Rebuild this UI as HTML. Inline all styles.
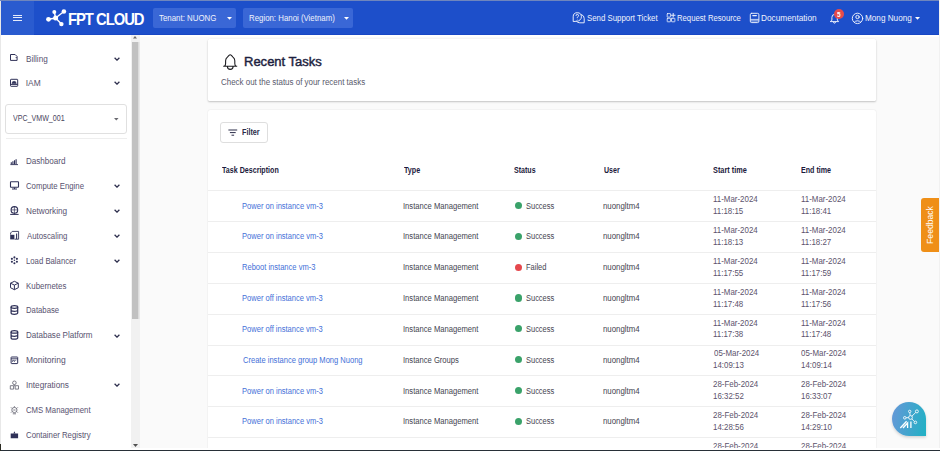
<!DOCTYPE html>
<html><head><meta charset="utf-8"><style>
html,body{margin:0;padding:0;width:940px;height:451px;overflow:hidden;background:#fff}
body{position:relative;font-family:"Liberation Sans", sans-serif}
.t{position:absolute;white-space:nowrap}
</style></head><body>
<div style="position:absolute;left:0;top:34.5px;width:940px;height:416px;background:#fff"></div>
<div style="position:absolute;left:1px;top:1px;width:938px;height:33.9px;background:#1d4fca"></div>
<div style="position:absolute;left:1px;top:33.6px;width:938px;height:1.3px;background:#1847c4"></div>
<div style="position:absolute;left:1px;top:1px;width:32.5px;height:33.5px;background:#2a5bcf"></div>
<div style="position:absolute;left:0;top:0;width:940px;height:1.2px;background:#6f86bd"></div>
<div style="position:absolute;left:12.5px;top:14.6px;width:9.7px;height:1.1px;background:#e6ecfa"></div>
<div style="position:absolute;left:12.5px;top:17.4px;width:9.7px;height:1.1px;background:#e6ecfa"></div>
<div style="position:absolute;left:12.5px;top:20.1px;width:9.7px;height:1.1px;background:#e6ecfa"></div>
<svg style="position:absolute;left:0;top:0" width="150" height="35" viewBox="0 0 150 35">
<g stroke="#fff" stroke-width="1.4" fill="none"><line x1="55.6" y1="18" x2="48.5" y2="19.3"/><line x1="55.6" y1="18" x2="54.3" y2="12.1"/><line x1="55.6" y1="18" x2="63.9" y2="11.5"/><line x1="55.6" y1="18" x2="61.4" y2="24.1"/></g>
<g fill="#fff"><circle cx="55.6" cy="18" r="2.5"/><circle cx="48.5" cy="19.3" r="2.4"/><circle cx="54.3" cy="12.1" r="2"/><circle cx="63.9" cy="11.5" r="2.3"/><circle cx="61.4" cy="24.1" r="2.2"/></g>
</svg>
<div class="t" style="left:67.71px;top:11px;font-size:16.200px;line-height:16.200px;color:#fff;font-weight:700;transform:scaleX(0.9126);transform-origin:0 0;letter-spacing:-1.1px;">FPT CLOUD</div>
<div style="position:absolute;left:153.2px;top:8.2px;width:82.4px;height:19.4px;background:#3a67d6;border-radius:2px"></div>
<div style="position:absolute;left:242.9px;top:8.2px;width:110.5px;height:19.4px;background:#3a67d6;border-radius:2px"></div>
<div class="t" style="left:159.34px;top:14px;font-size:8.400px;line-height:8.400px;color:#f0f3fc;font-weight:400;transform:scaleX(0.9418);transform-origin:0 0;">Tenant: NUONG</div>
<div class="t" style="left:248.57px;top:14px;font-size:8.400px;line-height:8.400px;color:#f0f3fc;font-weight:400;transform:scaleX(0.9371);transform-origin:0 0;">Region: Hanoi (Vietnam)</div>
<svg style="position:absolute;left:226.80px;top:16.80px" width="5" height="2.8" viewBox="0 0 5 2.8"><polygon points="0,0 5,0 2.5,2.8" fill="#fff"/></svg>
<svg style="position:absolute;left:344.40px;top:16.80px" width="5" height="2.8" viewBox="0 0 5 2.8"><polygon points="0,0 5,0 2.5,2.8" fill="#fff"/></svg>
<div class="t" style="left:587.29px;top:14px;font-size:8.400px;line-height:8.400px;color:#f0f3fc;font-weight:400;transform:scaleX(0.9367);transform-origin:0 0;">Send Support Ticket</div>
<div class="t" style="left:677.38px;top:14px;font-size:8.400px;line-height:8.400px;color:#f0f3fc;font-weight:400;transform:scaleX(0.9213);transform-origin:0 0;">Request Resource</div>
<div class="t" style="left:760.64px;top:14px;font-size:8.400px;line-height:8.400px;color:#f0f3fc;font-weight:400;transform:scaleX(0.9882);transform-origin:0 0;">Documentation</div>
<div class="t" style="left:864.84px;top:14px;font-size:8.400px;line-height:8.400px;color:#f0f3fc;font-weight:400;transform:scaleX(0.9754);transform-origin:0 0;">Mong Nuong</div>
<svg style="position:absolute;left:915.20px;top:16.80px" width="5" height="2.8" viewBox="0 0 5 2.8"><polygon points="0,0 5,0 2.5,2.8" fill="#fff"/></svg>
<svg style="position:absolute;left:0;top:0" width="940" height="35" viewBox="0 0 940 35" fill="none" stroke="#eef2fc" stroke-width="0.95" stroke-linejoin="round" stroke-linecap="round">
<path d="M573.2 21.2 v-4.4 a4.1 4.1 0 0 1 4.1 -4.1 a4.1 4.1 0 0 1 4.1 4.1 a4.3 4.3 0 0 1 -4.1 4.4 z"/>
<path d="M581.6 14.6 a4 4 0 0 1 2.6 3.8 v4.4 h-4.4 a4.1 4.1 0 0 1 -3.4 -1.6"/>
<path d="M576 15.6 a1.3 1.3 0 1 1 1.9 1.1 c-.5 .3 -.6 .5 -.6 1.1" stroke-width="0.9"/><circle cx="577.3" cy="19.3" r=".35" fill="#eef2fc" stroke="none"/>
<g stroke-width=".8"><rect x="667.2" y="13.6" width="3.4" height="3.5" rx=".4"/><rect x="667.2" y="18.3" width="3.4" height="3.5" rx=".4"/><rect x="671.5" y="18.3" width="3.4" height="3.5" rx=".4"/></g>
<path d="M673.2 13.4 v3.7 M671.4 15.25 h3.7"/>
<rect x="750.3" y="13.3" width="8.6" height="9.3" rx="1.4"/>
<path d="M752.8 15.6 h3.6" stroke-width="1.1"/><path d="M750.8 19.4 h7.6 M750.8 20.9 h7.6" stroke-width=".8"/>
<path d="M830.6 21.6 h8 l-1.3 -1.6 v-2.6 a2.7 3 0 0 0 -5.4 0 v2.6 z M833.5 22.2 a1 1 0 0 0 2 0"/>
<circle cx="857.5" cy="18.4" r="5.2"/><circle cx="857.5" cy="17" r="1.7"/><path d="M854.3 22.2 a3.6 2.6 0 0 1 6.4 0"/>
</svg>
<div style="position:absolute;left:834px;top:8.6px;width:10px;height:10px;border-radius:50%;background:#e64b4b"></div>
<div class="t" style="left:837.21px;top:12px;font-size:6.500px;line-height:6.500px;color:#fff;font-weight:700;transform:scaleX(0.9846);transform-origin:0 0;">5</div>
<div style="position:absolute;left:131px;top:34.5px;width:8.6px;height:415px;background:#f1f1f1"></div>
<div style="position:absolute;left:132.2px;top:41.5px;width:6.2px;height:277.3px;background:#c1c1c1"></div>
<svg style="position:absolute;left:133.3px;top:36.2px" width="4" height="2.4" viewBox="0 0 4 2.4"><polygon points="0,2.4 4,2.4 2,0" fill="#6a6a6a"/></svg>
<div style="position:absolute;left:138.3px;top:41.5px;width:1.6px;height:277.3px;background:linear-gradient(90deg,#d6d6d6,#eeeeee)"></div>
<svg style="position:absolute;left:133px;top:443.5px" width="5" height="3" viewBox="0 0 5 3"><polygon points="0,0 5,0 2.5,3" fill="#505050"/></svg>
<div class="t" style="left:25.85px;top:55px;font-size:8.400px;line-height:8.400px;color:#57526f;font-weight:400;transform:scaleX(0.9733);transform-origin:0 0;">Billing</div>
<svg style="position:absolute;left:114.40px;top:56.80px" width="6" height="4" viewBox="0 0 6 4"><path d="M0.6 0.7 L3 3.1 L5.4 0.7" stroke="#2e2f4e" stroke-width="1.3" fill="none"/></svg>
<div class="t" style="left:25.75px;top:79px;font-size:8.400px;line-height:8.400px;color:#57526f;font-weight:400;">IAM</div>
<svg style="position:absolute;left:114.40px;top:81.30px" width="6" height="4" viewBox="0 0 6 4"><path d="M0.6 0.7 L3 3.1 L5.4 0.7" stroke="#2e2f4e" stroke-width="1.3" fill="none"/></svg>
<div style="position:absolute;left:5.1px;top:104.4px;width:120px;height:27.4px;border:1px solid #e0e0e0;border-radius:3px;background:#fff"></div>
<div class="t" style="left:13.00px;top:114px;font-size:8.400px;line-height:8.400px;color:#4a465e;font-weight:400;transform:scaleX(0.8458);transform-origin:0 0;">VPC_VMW_001</div>
<svg style="position:absolute;left:114.40px;top:118.00px" width="4.6" height="2.6" viewBox="0 0 4.6 2.6"><polygon points="0,0 4.6,0 2.3,2.6" fill="#6a6a70"/></svg>
<div style="position:absolute;left:5.6px;top:138px;width:121.4px;height:1px;background:#eeeeee"></div>
<div class="t" style="left:25.85px;top:157px;font-size:8.400px;line-height:8.400px;color:#57526f;font-weight:400;transform:scaleX(0.9637);transform-origin:0 0;">Dashboard</div>
<div class="t" style="left:26.11px;top:182px;font-size:8.400px;line-height:8.400px;color:#57526f;font-weight:400;transform:scaleX(0.9297);transform-origin:0 0;">Compute Engine</div>
<svg style="position:absolute;left:114.40px;top:184.20px" width="6" height="4" viewBox="0 0 6 4"><path d="M0.6 0.7 L3 3.1 L5.4 0.7" stroke="#2e2f4e" stroke-width="1.3" fill="none"/></svg>
<div class="t" style="left:25.84px;top:207px;font-size:8.400px;line-height:8.400px;color:#57526f;font-weight:400;transform:scaleX(0.9811);transform-origin:0 0;">Networking</div>
<svg style="position:absolute;left:114.40px;top:209.10px" width="6" height="4" viewBox="0 0 6 4"><path d="M0.6 0.7 L3 3.1 L5.4 0.7" stroke="#2e2f4e" stroke-width="1.3" fill="none"/></svg>
<div class="t" style="left:26.50px;top:232px;font-size:8.400px;line-height:8.400px;color:#57526f;font-weight:400;transform:scaleX(0.9312);transform-origin:0 0;">Autoscaling</div>
<svg style="position:absolute;left:114.40px;top:234.00px" width="6" height="4" viewBox="0 0 6 4"><path d="M0.6 0.7 L3 3.1 L5.4 0.7" stroke="#2e2f4e" stroke-width="1.3" fill="none"/></svg>
<div class="t" style="left:25.88px;top:257px;font-size:8.400px;line-height:8.400px;color:#57526f;font-weight:400;transform:scaleX(0.9252);transform-origin:0 0;">Load Balancer</div>
<svg style="position:absolute;left:114.40px;top:258.90px" width="6" height="4" viewBox="0 0 6 4"><path d="M0.6 0.7 L3 3.1 L5.4 0.7" stroke="#2e2f4e" stroke-width="1.3" fill="none"/></svg>
<div class="t" style="left:25.87px;top:282px;font-size:8.400px;line-height:8.400px;color:#57526f;font-weight:400;transform:scaleX(0.9420);transform-origin:0 0;">Kubernetes</div>
<div class="t" style="left:25.88px;top:306px;font-size:8.400px;line-height:8.400px;color:#57526f;font-weight:400;transform:scaleX(0.9233);transform-origin:0 0;">Database</div>
<div class="t" style="left:25.86px;top:331px;font-size:8.400px;line-height:8.400px;color:#57526f;font-weight:400;transform:scaleX(0.9581);transform-origin:0 0;">Database Platform</div>
<svg style="position:absolute;left:114.40px;top:333.60px" width="6" height="4" viewBox="0 0 6 4"><path d="M0.6 0.7 L3 3.1 L5.4 0.7" stroke="#2e2f4e" stroke-width="1.3" fill="none"/></svg>
<div class="t" style="left:25.82px;top:356px;font-size:8.400px;line-height:8.400px;color:#57526f;font-weight:400;transform:scaleX(1.0138);transform-origin:0 0;">Monitoring</div>
<div class="t" style="left:25.76px;top:381px;font-size:8.400px;line-height:8.400px;color:#57526f;font-weight:400;transform:scaleX(0.9793);transform-origin:0 0;">Integrations</div>
<svg style="position:absolute;left:114.40px;top:383.40px" width="6" height="4" viewBox="0 0 6 4"><path d="M0.6 0.7 L3 3.1 L5.4 0.7" stroke="#2e2f4e" stroke-width="1.3" fill="none"/></svg>
<div class="t" style="left:26.11px;top:406px;font-size:8.400px;line-height:8.400px;color:#57526f;font-weight:400;transform:scaleX(0.9249);transform-origin:0 0;">CMS Management</div>
<div class="t" style="left:26.11px;top:431px;font-size:8.400px;line-height:8.400px;color:#57526f;font-weight:400;transform:scaleX(0.9314);transform-origin:0 0;">Container Registry</div>
<svg style="position:absolute;left:0;top:0" width="30" height="451" viewBox="0 0 30 451" fill="none" stroke="#2f3158" stroke-width="1" stroke-linejoin="round">
<path d="M10.5 54.5 h4.6 l2 2 v3.9 h-6.6 z"/><path d="M15.6 57.6 h1.4" stroke-width=".8"/>
<rect x="10.5" y="79.3" width="7.2" height="7" rx=".6"/><path d="M10.5 84.4 h7.2" /><path d="M12 83.6 a2.1 2.3 0 0 1 4.2 0 z" fill="#2f3158" stroke-width=".6"/>
<path d="M10.4 164.6 h7.6" stroke-width=".9"/><path d="M11.3 164.2 v-2 M12.9 164.2 v-3 M14.5 164.2 v-4 M16.1 164.2 v-5" stroke-width="1.1"/>
<rect x="10.5" y="181.8" width="8" height="5.4" rx=".5" stroke-width="1.1"/><path d="M12 189 h5 M14.5 187.4 v1.6" stroke-width="1.1"/>
<circle cx="14.4" cy="209.9" r="3.3" stroke-width="1.1"/><path d="M14.4 206.6 v6.6 M11.1 209.9 h6.6" stroke-width=".7"/><path d="M10.2 214.4 h8.4" stroke-width="1"/><path d="M14.4 213.2 v1.2" stroke-width="1"/>
<path d="M10.2 234.8 h4.2 v4.6 h-4.2 z" fill="#2f3158" stroke="none"/><path d="M10.6 234.6 v-1.6 l1.6 -1.6 h6.4 v7.8 h-4" stroke-width=".9"/><path d="M16.6 233.6 v5.4" stroke-width="1.1"/>
</svg>
<svg style="position:absolute;left:0;top:0" width="30" height="451" viewBox="0 0 30 451" fill="#2f3158" stroke="none">
<circle cx="14.40" cy="257.40" r="1.05"/><circle cx="16.91" cy="258.85" r="1.05"/><circle cx="16.91" cy="261.75" r="1.05"/><circle cx="14.40" cy="263.20" r="1.05"/><circle cx="11.89" cy="261.75" r="1.05"/><circle cx="11.89" cy="258.85" r="1.05"/><circle cx="14.4" cy="260.3" r=".8"/>
</svg>
<svg style="position:absolute;left:0;top:0" width="30" height="451" viewBox="0 0 30 451" fill="none" stroke="#2f3158" stroke-width="1" stroke-linejoin="round">
<path d="M14.4 281.3 l3.9 1.9 v4.5 l-3.9 2 l-3.9 -2 v-4.5 z M10.5 283.2 l3.9 1.9 l3.9 -1.9 M14.4 285.1 v4.6"/>
<g stroke-width="1.25"><ellipse cx="14.4" cy="307" rx="3.3" ry="1.3"/><path d="M11.1 307 v6 a3.3 1.3 0 0 0 6.6 0 v-6 M11.1 310.1 a3.3 1.3 0 0 0 6.6 0"/></g>
<g stroke-width="1.25"><ellipse cx="14.4" cy="331.9" rx="3.3" ry="1.3"/><path d="M11.1 331.9 v6 a3.3 1.3 0 0 0 6.6 0 v-6 M11.1 335 a3.3 1.3 0 0 0 6.6 0"/></g>
<rect x="11.1" y="357" width="6.6" height="6.6" rx=".5" stroke-width="1"/><path d="M11.1 358.8 h6.6" stroke-width=".9"/><path d="M12.6 362 v-1.6 h1.8 v1.6 M15.2 360.4 h1" stroke-width=".7"/>
</svg>
<svg style="position:absolute;left:0;top:0" width="30" height="451" viewBox="0 0 30 451" fill="none" stroke="#6f6f7c" stroke-width=".9" stroke-linejoin="round">
<circle cx="14.4" cy="382.8" r="1.8"/><rect x="10.3" y="385.7" width="3.3" height="3.4"/><rect x="15.2" y="385.7" width="3.3" height="3.4"/><path d="M14.4 384.6 v1.6"/>
<circle cx="14.4" cy="410" r="2.6"/><path d="M11 407.4 l1 1 M17.8 407.4 l-1 1 M11 412.6 l1 -1 M17.8 412.6 l-1 -1 M14.4 406.2 v1.2 M12.8 413.8 h3.2 M13.3 410 h2.2"/>
</svg>
<svg style="position:absolute;left:0;top:0" width="30" height="451" viewBox="0 0 30 451" fill="#2f3158" stroke="none">
<path d="M10.7 433.6 h7.4 v4.6 h-7.4 z"/><path d="M13.4 433.6 l1 -2.4 l1 2.4 z"/>
</svg>
<div style="position:absolute;left:139.6px;top:36.8px;width:799.4px;height:412.7px;background:#fafafa"></div>
<div style="position:absolute;left:207.6px;top:39.4px;width:668.4px;height:61.5px;background:#fff;border-radius:1.5px;box-shadow:0 1px 2px rgba(0,0,0,0.22), 0 0 1px rgba(0,0,0,0.08)"></div>
<svg style="position:absolute;left:220px;top:52px" width="20" height="20" viewBox="0 0 20 20" fill="none" stroke="#1e1e22" stroke-width="1.1" stroke-linejoin="round">
<path d="M3.2 14.3 H17.2 M4.3 14.3 Q5.6 13.6 5.6 11.5 V8.8 Q5.6 6.6 7.4 5.1 L9 3.4 Q10.2 2.2 11.4 3.4 L13 5.1 Q14.8 6.6 14.8 8.8 V11.5 Q14.8 13.6 16.1 14.3 M7.4 14.5 A2.85 2.85 0 0 0 13.1 14.5"/>
</svg>
<div class="t" style="left:243.56px;top:55px;font-size:13.200px;line-height:13.200px;color:#1d1f3f;font-weight:400;transform:scaleX(0.9861);transform-origin:0 0;-webkit-text-stroke:0.45px #1d1f3f;">Recent Tasks</div>
<div class="t" style="left:220.50px;top:78px;font-size:8.400px;line-height:8.400px;color:#585a6c;font-weight:400;transform:scaleX(0.9496);transform-origin:0 0;">Check out the status of your recent tasks</div>
<div style="position:absolute;left:207.6px;top:109.8px;width:668.4px;height:400px;background:#fff;border-radius:2px;box-shadow:0 0 1.5px rgba(0,0,0,0.14)"></div>
<div style="position:absolute;left:220.4px;top:122.4px;width:45.4px;height:18.2px;border:1px solid #dedede;border-radius:3px;background:#fff"></div>
<svg style="position:absolute;left:228px;top:129px" width="10" height="8" viewBox="0 0 10 8" stroke="#2a2c48" stroke-width="1"><path d="M0.4 1 h8.8 M1.9 3.6 h5.8 M3.5 6.2 h2.6"/></svg>
<div class="t" style="left:241.77px;top:129px;font-size:8.200px;line-height:8.200px;color:#2a2c48;font-weight:700;transform:scaleX(0.8829);transform-origin:0 0;">Filter</div>
<div class="t" style="left:221.53px;top:166px;font-size:8.400px;line-height:8.400px;color:#1c1a3c;font-weight:700;transform:scaleX(0.8485);transform-origin:0 0;">Task Description</div>
<div class="t" style="left:403.73px;top:166px;font-size:8.400px;line-height:8.400px;color:#1c1a3c;font-weight:700;transform:scaleX(0.8566);transform-origin:0 0;">Type</div>
<div class="t" style="left:513.56px;top:166px;font-size:8.400px;line-height:8.400px;color:#1c1a3c;font-weight:700;transform:scaleX(0.8452);transform-origin:0 0;">Status</div>
<div class="t" style="left:603.68px;top:166px;font-size:8.400px;line-height:8.400px;color:#1c1a3c;font-weight:700;transform:scaleX(0.8399);transform-origin:0 0;">User</div>
<div class="t" style="left:713.45px;top:166px;font-size:8.400px;line-height:8.400px;color:#1c1a3c;font-weight:700;transform:scaleX(0.8734);transform-origin:0 0;">Start time</div>
<div class="t" style="left:800.87px;top:166px;font-size:8.400px;line-height:8.400px;color:#1c1a3c;font-weight:700;transform:scaleX(0.8490);transform-origin:0 0;">End time</div>
<div style="position:absolute;left:208px;top:190.40px;width:668px;height:1px;background:#eeeeee"></div>
<div class="t" style="left:242.39px;top:202px;font-size:8.400px;line-height:8.400px;color:#4470d8;font-weight:400;transform:scaleX(0.9010);transform-origin:0 0;">Power on instance vm-3</div>
<div class="t" style="left:403.11px;top:202px;font-size:8.400px;line-height:8.400px;color:#44444f;font-weight:400;transform:scaleX(0.9090);transform-origin:0 0;">Instance Management</div>
<div style="position:absolute;left:515px;top:201.90px;width:7.2px;height:7.2px;border-radius:50%;background:#3aa26a"></div>
<div class="t" style="left:525.90px;top:202px;font-size:8.400px;line-height:8.400px;color:#44444f;font-weight:400;transform:scaleX(0.8920);transform-origin:0 0;">Success</div>
<div class="t" style="left:603.43px;top:202px;font-size:8.400px;line-height:8.400px;color:#44444f;font-weight:400;transform:scaleX(0.9376);transform-origin:0 0;">nuongltm4</div>
<div class="t" style="left:713.24px;top:195px;font-size:8.400px;line-height:8.400px;color:#5c536c;font-weight:400;transform:scaleX(0.9440);transform-origin:0 0;">11-Mar-2024</div>
<div class="t" style="left:713.24px;top:207px;font-size:8.400px;line-height:8.400px;color:#5c536c;font-weight:400;transform:scaleX(0.9440);transform-origin:0 0;">11:18:15</div>
<div class="t" style="left:800.94px;top:195px;font-size:8.400px;line-height:8.400px;color:#5c536c;font-weight:400;transform:scaleX(0.9440);transform-origin:0 0;">11-Mar-2024</div>
<div class="t" style="left:800.94px;top:207px;font-size:8.400px;line-height:8.400px;color:#5c536c;font-weight:400;transform:scaleX(0.9440);transform-origin:0 0;">11:18:41</div>
<div style="position:absolute;left:208px;top:221.24px;width:668px;height:1px;background:#eeeeee"></div>
<div class="t" style="left:242.39px;top:232px;font-size:8.400px;line-height:8.400px;color:#4470d8;font-weight:400;transform:scaleX(0.9010);transform-origin:0 0;">Power on instance vm-3</div>
<div class="t" style="left:403.11px;top:232px;font-size:8.400px;line-height:8.400px;color:#44444f;font-weight:400;transform:scaleX(0.9090);transform-origin:0 0;">Instance Management</div>
<div style="position:absolute;left:515px;top:232.74px;width:7.2px;height:7.2px;border-radius:50%;background:#3aa26a"></div>
<div class="t" style="left:525.90px;top:232px;font-size:8.400px;line-height:8.400px;color:#44444f;font-weight:400;transform:scaleX(0.8920);transform-origin:0 0;">Success</div>
<div class="t" style="left:603.43px;top:232px;font-size:8.400px;line-height:8.400px;color:#44444f;font-weight:400;transform:scaleX(0.9376);transform-origin:0 0;">nuongltm4</div>
<div class="t" style="left:713.24px;top:226px;font-size:8.400px;line-height:8.400px;color:#5c536c;font-weight:400;transform:scaleX(0.9440);transform-origin:0 0;">11-Mar-2024</div>
<div class="t" style="left:713.24px;top:238px;font-size:8.400px;line-height:8.400px;color:#5c536c;font-weight:400;transform:scaleX(0.9440);transform-origin:0 0;">11:18:13</div>
<div class="t" style="left:800.94px;top:226px;font-size:8.400px;line-height:8.400px;color:#5c536c;font-weight:400;transform:scaleX(0.9440);transform-origin:0 0;">11-Mar-2024</div>
<div class="t" style="left:800.94px;top:238px;font-size:8.400px;line-height:8.400px;color:#5c536c;font-weight:400;transform:scaleX(0.9440);transform-origin:0 0;">11:18:27</div>
<div style="position:absolute;left:208px;top:252.08px;width:668px;height:1px;background:#eeeeee"></div>
<div class="t" style="left:242.39px;top:263px;font-size:8.400px;line-height:8.400px;color:#4470d8;font-weight:400;transform:scaleX(0.9010);transform-origin:0 0;">Reboot instance vm-3</div>
<div class="t" style="left:403.11px;top:263px;font-size:8.400px;line-height:8.400px;color:#44444f;font-weight:400;transform:scaleX(0.9090);transform-origin:0 0;">Instance Management</div>
<div style="position:absolute;left:515px;top:263.58px;width:7.2px;height:7.2px;border-radius:50%;background:#e5484d"></div>
<div class="t" style="left:525.60px;top:263px;font-size:8.400px;line-height:8.400px;color:#44444f;font-weight:400;transform:scaleX(0.8920);transform-origin:0 0;">Failed</div>
<div class="t" style="left:603.43px;top:263px;font-size:8.400px;line-height:8.400px;color:#44444f;font-weight:400;transform:scaleX(0.9376);transform-origin:0 0;">nuongltm4</div>
<div class="t" style="left:713.24px;top:257px;font-size:8.400px;line-height:8.400px;color:#5c536c;font-weight:400;transform:scaleX(0.9440);transform-origin:0 0;">11-Mar-2024</div>
<div class="t" style="left:713.24px;top:269px;font-size:8.400px;line-height:8.400px;color:#5c536c;font-weight:400;transform:scaleX(0.9440);transform-origin:0 0;">11:17:55</div>
<div class="t" style="left:800.94px;top:257px;font-size:8.400px;line-height:8.400px;color:#5c536c;font-weight:400;transform:scaleX(0.9440);transform-origin:0 0;">11-Mar-2024</div>
<div class="t" style="left:800.94px;top:269px;font-size:8.400px;line-height:8.400px;color:#5c536c;font-weight:400;transform:scaleX(0.9440);transform-origin:0 0;">11:17:59</div>
<div style="position:absolute;left:208px;top:282.92px;width:668px;height:1px;background:#eeeeee"></div>
<div class="t" style="left:242.39px;top:294px;font-size:8.400px;line-height:8.400px;color:#4470d8;font-weight:400;transform:scaleX(0.9010);transform-origin:0 0;">Power off instance vm-3</div>
<div class="t" style="left:403.11px;top:294px;font-size:8.400px;line-height:8.400px;color:#44444f;font-weight:400;transform:scaleX(0.9090);transform-origin:0 0;">Instance Management</div>
<div style="position:absolute;left:515px;top:294.42px;width:7.2px;height:7.2px;border-radius:50%;background:#3aa26a"></div>
<div class="t" style="left:525.90px;top:294px;font-size:8.400px;line-height:8.400px;color:#44444f;font-weight:400;transform:scaleX(0.8920);transform-origin:0 0;">Success</div>
<div class="t" style="left:603.43px;top:294px;font-size:8.400px;line-height:8.400px;color:#44444f;font-weight:400;transform:scaleX(0.9376);transform-origin:0 0;">nuongltm4</div>
<div class="t" style="left:713.24px;top:288px;font-size:8.400px;line-height:8.400px;color:#5c536c;font-weight:400;transform:scaleX(0.9440);transform-origin:0 0;">11-Mar-2024</div>
<div class="t" style="left:713.24px;top:300px;font-size:8.400px;line-height:8.400px;color:#5c536c;font-weight:400;transform:scaleX(0.9440);transform-origin:0 0;">11:17:48</div>
<div class="t" style="left:800.94px;top:288px;font-size:8.400px;line-height:8.400px;color:#5c536c;font-weight:400;transform:scaleX(0.9440);transform-origin:0 0;">11-Mar-2024</div>
<div class="t" style="left:800.94px;top:300px;font-size:8.400px;line-height:8.400px;color:#5c536c;font-weight:400;transform:scaleX(0.9440);transform-origin:0 0;">11:17:56</div>
<div style="position:absolute;left:208px;top:313.76px;width:668px;height:1px;background:#eeeeee"></div>
<div class="t" style="left:242.39px;top:325px;font-size:8.400px;line-height:8.400px;color:#4470d8;font-weight:400;transform:scaleX(0.9010);transform-origin:0 0;">Power off instance vm-3</div>
<div class="t" style="left:403.11px;top:325px;font-size:8.400px;line-height:8.400px;color:#44444f;font-weight:400;transform:scaleX(0.9090);transform-origin:0 0;">Instance Management</div>
<div style="position:absolute;left:515px;top:325.26px;width:7.2px;height:7.2px;border-radius:50%;background:#3aa26a"></div>
<div class="t" style="left:525.90px;top:325px;font-size:8.400px;line-height:8.400px;color:#44444f;font-weight:400;transform:scaleX(0.8920);transform-origin:0 0;">Success</div>
<div class="t" style="left:603.43px;top:325px;font-size:8.400px;line-height:8.400px;color:#44444f;font-weight:400;transform:scaleX(0.9376);transform-origin:0 0;">nuongltm4</div>
<div class="t" style="left:713.24px;top:319px;font-size:8.400px;line-height:8.400px;color:#5c536c;font-weight:400;transform:scaleX(0.9440);transform-origin:0 0;">11-Mar-2024</div>
<div class="t" style="left:713.24px;top:330px;font-size:8.400px;line-height:8.400px;color:#5c536c;font-weight:400;transform:scaleX(0.9440);transform-origin:0 0;">11:17:38</div>
<div class="t" style="left:800.94px;top:319px;font-size:8.400px;line-height:8.400px;color:#5c536c;font-weight:400;transform:scaleX(0.9440);transform-origin:0 0;">11-Mar-2024</div>
<div class="t" style="left:800.94px;top:330px;font-size:8.400px;line-height:8.400px;color:#5c536c;font-weight:400;transform:scaleX(0.9440);transform-origin:0 0;">11:17:48</div>
<div style="position:absolute;left:208px;top:344.60px;width:668px;height:1px;background:#eeeeee"></div>
<div class="t" style="left:242.62px;top:356px;font-size:8.400px;line-height:8.400px;color:#4470d8;font-weight:400;transform:scaleX(0.9010);transform-origin:0 0;">Create instance group Mong Nuong</div>
<div class="t" style="left:403.11px;top:356px;font-size:8.400px;line-height:8.400px;color:#44444f;font-weight:400;transform:scaleX(0.9090);transform-origin:0 0;">Instance Groups</div>
<div style="position:absolute;left:515px;top:356.10px;width:7.2px;height:7.2px;border-radius:50%;background:#3aa26a"></div>
<div class="t" style="left:525.90px;top:356px;font-size:8.400px;line-height:8.400px;color:#44444f;font-weight:400;transform:scaleX(0.8920);transform-origin:0 0;">Success</div>
<div class="t" style="left:603.43px;top:356px;font-size:8.400px;line-height:8.400px;color:#44444f;font-weight:400;transform:scaleX(0.9376);transform-origin:0 0;">nuongltm4</div>
<div class="t" style="left:713.56px;top:349px;font-size:8.400px;line-height:8.400px;color:#5c536c;font-weight:400;transform:scaleX(0.9440);transform-origin:0 0;">05-Mar-2024</div>
<div class="t" style="left:713.24px;top:361px;font-size:8.400px;line-height:8.400px;color:#5c536c;font-weight:400;transform:scaleX(0.9440);transform-origin:0 0;">14:09:13</div>
<div class="t" style="left:801.26px;top:349px;font-size:8.400px;line-height:8.400px;color:#5c536c;font-weight:400;transform:scaleX(0.9440);transform-origin:0 0;">05-Mar-2024</div>
<div class="t" style="left:800.94px;top:361px;font-size:8.400px;line-height:8.400px;color:#5c536c;font-weight:400;transform:scaleX(0.9440);transform-origin:0 0;">14:09:14</div>
<div style="position:absolute;left:208px;top:375.44px;width:668px;height:1px;background:#eeeeee"></div>
<div class="t" style="left:242.39px;top:387px;font-size:8.400px;line-height:8.400px;color:#4470d8;font-weight:400;transform:scaleX(0.9010);transform-origin:0 0;">Power on instance vm-3</div>
<div class="t" style="left:403.11px;top:387px;font-size:8.400px;line-height:8.400px;color:#44444f;font-weight:400;transform:scaleX(0.9090);transform-origin:0 0;">Instance Management</div>
<div style="position:absolute;left:515px;top:386.94px;width:7.2px;height:7.2px;border-radius:50%;background:#3aa26a"></div>
<div class="t" style="left:525.90px;top:387px;font-size:8.400px;line-height:8.400px;color:#44444f;font-weight:400;transform:scaleX(0.8920);transform-origin:0 0;">Success</div>
<div class="t" style="left:603.43px;top:387px;font-size:8.400px;line-height:8.400px;color:#44444f;font-weight:400;transform:scaleX(0.9376);transform-origin:0 0;">nuongltm4</div>
<div class="t" style="left:713.40px;top:380px;font-size:8.400px;line-height:8.400px;color:#5c536c;font-weight:400;transform:scaleX(0.9440);transform-origin:0 0;">28-Feb-2024</div>
<div class="t" style="left:713.24px;top:392px;font-size:8.400px;line-height:8.400px;color:#5c536c;font-weight:400;transform:scaleX(0.9440);transform-origin:0 0;">16:32:52</div>
<div class="t" style="left:801.10px;top:380px;font-size:8.400px;line-height:8.400px;color:#5c536c;font-weight:400;transform:scaleX(0.9440);transform-origin:0 0;">28-Feb-2024</div>
<div class="t" style="left:800.94px;top:392px;font-size:8.400px;line-height:8.400px;color:#5c536c;font-weight:400;transform:scaleX(0.9440);transform-origin:0 0;">16:33:07</div>
<div style="position:absolute;left:208px;top:406.28px;width:668px;height:1px;background:#eeeeee"></div>
<div class="t" style="left:242.39px;top:417px;font-size:8.400px;line-height:8.400px;color:#4470d8;font-weight:400;transform:scaleX(0.9010);transform-origin:0 0;">Power on instance vm-3</div>
<div class="t" style="left:403.11px;top:417px;font-size:8.400px;line-height:8.400px;color:#44444f;font-weight:400;transform:scaleX(0.9090);transform-origin:0 0;">Instance Management</div>
<div style="position:absolute;left:515px;top:417.78px;width:7.2px;height:7.2px;border-radius:50%;background:#3aa26a"></div>
<div class="t" style="left:525.90px;top:417px;font-size:8.400px;line-height:8.400px;color:#44444f;font-weight:400;transform:scaleX(0.8920);transform-origin:0 0;">Success</div>
<div class="t" style="left:603.43px;top:417px;font-size:8.400px;line-height:8.400px;color:#44444f;font-weight:400;transform:scaleX(0.9376);transform-origin:0 0;">nuongltm4</div>
<div class="t" style="left:713.40px;top:411px;font-size:8.400px;line-height:8.400px;color:#5c536c;font-weight:400;transform:scaleX(0.9440);transform-origin:0 0;">28-Feb-2024</div>
<div class="t" style="left:713.24px;top:423px;font-size:8.400px;line-height:8.400px;color:#5c536c;font-weight:400;transform:scaleX(0.9440);transform-origin:0 0;">14:28:56</div>
<div class="t" style="left:801.10px;top:411px;font-size:8.400px;line-height:8.400px;color:#5c536c;font-weight:400;transform:scaleX(0.9440);transform-origin:0 0;">28-Feb-2024</div>
<div class="t" style="left:800.94px;top:423px;font-size:8.400px;line-height:8.400px;color:#5c536c;font-weight:400;transform:scaleX(0.9440);transform-origin:0 0;">14:29:10</div>
<div style="position:absolute;left:208px;top:437.12px;width:668px;height:1px;background:#eeeeee"></div>
<div class="t" style="left:242.39px;top:448px;font-size:8.400px;line-height:8.400px;color:#4470d8;font-weight:400;transform:scaleX(0.9010);transform-origin:0 0;">Power off instance vm-3</div>
<div class="t" style="left:403.11px;top:448px;font-size:8.400px;line-height:8.400px;color:#44444f;font-weight:400;transform:scaleX(0.9090);transform-origin:0 0;">Instance Management</div>
<div style="position:absolute;left:515px;top:448.62px;width:7.2px;height:7.2px;border-radius:50%;background:#3aa26a"></div>
<div class="t" style="left:525.90px;top:448px;font-size:8.400px;line-height:8.400px;color:#44444f;font-weight:400;transform:scaleX(0.8920);transform-origin:0 0;">Success</div>
<div class="t" style="left:603.43px;top:448px;font-size:8.400px;line-height:8.400px;color:#44444f;font-weight:400;transform:scaleX(0.9376);transform-origin:0 0;">nuongltm4</div>
<div class="t" style="left:713.40px;top:442px;font-size:8.400px;line-height:8.400px;color:#5c536c;font-weight:400;transform:scaleX(0.9440);transform-origin:0 0;">28-Feb-2024</div>
<div class="t" style="left:713.24px;top:454px;font-size:8.400px;line-height:8.400px;color:#5c536c;font-weight:400;transform:scaleX(0.9440);transform-origin:0 0;">14:28:40</div>
<div class="t" style="left:801.10px;top:442px;font-size:8.400px;line-height:8.400px;color:#5c536c;font-weight:400;transform:scaleX(0.9440);transform-origin:0 0;">28-Feb-2024</div>
<div class="t" style="left:800.94px;top:454px;font-size:8.400px;line-height:8.400px;color:#5c536c;font-weight:400;transform:scaleX(0.9440);transform-origin:0 0;">14:28:52</div>
<div style="position:absolute;left:920.6px;top:197.5px;width:19px;height:54.7px;background:#ef8f17;border-radius:3px 0 0 3px"></div>
<div class="t" style="left:930.2px;top:224.9px;font-size:8.6px;line-height:8.6px;color:#fff;transform:translate(-50%,-50%) rotate(-90deg)">Feedback</div>
<div style="position:absolute;left:892px;top:402px;width:34px;height:34px;border-radius:17px 17px 0 17px;background:linear-gradient(100deg,#6797d8,#20b1c4);box-shadow:0 1.5px 3px rgba(0,0,0,0.16)"></div>
<svg style="position:absolute;left:892px;top:402px" width="34" height="34" viewBox="0 0 34 34" fill="none" stroke="#fff" stroke-width=".85">
<circle cx="18.5" cy="15.5" r="1.9"/><circle cx="12.8" cy="15.8" r="1.3"/><circle cx="17.7" cy="9.4" r="1.2"/><circle cx="24.9" cy="9.4" r="1.5"/><circle cx="23.4" cy="20.4" r="1.3"/>
<path d="M16.6 15.6 l-2.5 .1 M18.2 13.6 l-.4 -3 M19.9 14.2 l3.9 -3.8 M19.8 16.9 l2.6 2.6"/>
<path d="M8.3 26 l6.3 -6.8 M11 26 l4.6 -5 v5 M18.9 19.6 v6.4" stroke-width="1.3"/>
</svg>
<div style="position:absolute;left:0;top:448px;width:940px;height:2px;background:#fff"></div>
<div style="position:absolute;left:0;top:449.7px;width:940px;height:1.3px;background:#283038"></div>
<div style="position:absolute;left:0;top:444px;width:1.3px;height:7px;background:#2a2a22"></div>
<div style="position:absolute;left:939px;top:0;width:1px;height:448px;background:#f1f1f1"></div>
<div style="position:absolute;left:0;top:1px;width:1.2px;height:443px;background:#e8e8e8"></div>
</body></html>
